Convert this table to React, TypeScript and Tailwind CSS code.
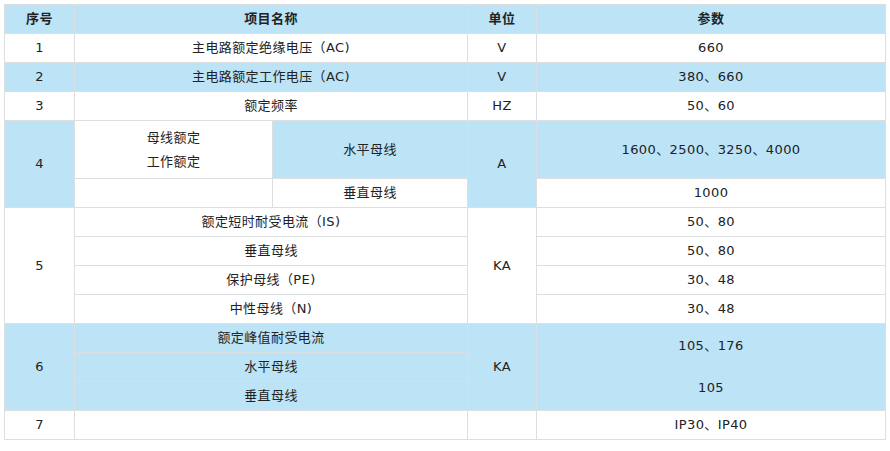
import React from "react";

const blue = "bg-[#bde3f7]";
const white = "bg-white";

type CellProps = {
	className?: string;
	children?: React.ReactNode;
};

function Cell({ className = "", children }: CellProps) {
	return (
		<div className={`flex items-center justify-center text-center ${className}`}>
			{children}
		</div>
	);
}

export default function App() {
	return (
		<div className="min-h-[451px] w-[890px] bg-white p-1 font-['DejaVu_Sans','Noto_Sans_CJK_SC',sans-serif] text-[13px] tracking-[0.4px] text-[#222]">
			<div className="grid w-[882px] grid-cols-[69px_197px_194px_68px_348px] grid-rows-[28px_28px_28px_28px_57px_28px_28px_28px_28px_28px_28px_28px_28px_28px] gap-px border border-[#dcdfe2] bg-[#dcdfe2]">
				{/* header */}
				<Cell className={`${blue} font-bold`}>序号</Cell>
				<Cell className={`${blue} col-span-2 font-bold`}>项目名称</Cell>
				<Cell className={`${blue} font-bold`}>单位</Cell>
				<Cell className={`${blue} font-bold`}>参数</Cell>

				{/* 1 */}
				<Cell className={white}>1</Cell>
				<Cell className={`${white} col-span-2`}>主电路额定绝缘电压（AC)</Cell>
				<Cell className={white}>V</Cell>
				<Cell className={white}>660</Cell>

				{/* 2 */}
				<Cell className={blue}>2</Cell>
				<Cell className={`${blue} col-span-2`}>主电路额定工作电压（AC)</Cell>
				<Cell className={blue}>V</Cell>
				<Cell className={blue}>380、660</Cell>

				{/* 3 */}
				<Cell className={white}>3</Cell>
				<Cell className={`${white} col-span-2`}>额定频率</Cell>
				<Cell className={white}>HZ</Cell>
				<Cell className={white}>50、60</Cell>

				{/* 4 */}
				<Cell className={`${blue} col-start-1 row-start-5 row-span-2`}>4</Cell>
				<Cell className={`${white} col-start-2 row-start-5 flex-col leading-[24px]`}>
					<span>母线额定</span>
					<span>工作额定</span>
				</Cell>
				<Cell className={`${blue} col-start-3 row-start-5`}>水平母线</Cell>
				<Cell className={`${blue} col-start-4 row-start-5 row-span-2`}>A</Cell>
				<Cell className={`${blue} col-start-5 row-start-5`}>1600、2500、3250、4000</Cell>
				<Cell className={`${white} col-start-2 row-start-6`} />
				<Cell className={`${white} col-start-3 row-start-6`}>垂直母线</Cell>
				<Cell className={`${white} col-start-5 row-start-6`}>1000</Cell>

				{/* 5 */}
				<Cell className={`${white} col-start-1 row-start-7 row-span-4`}>5</Cell>
				<Cell className={`${white} col-start-2 col-span-2 row-start-7`}>额定短时耐受电流（IS)</Cell>
				<Cell className={`${white} col-start-2 col-span-2 row-start-8`}>垂直母线</Cell>
				<Cell className={`${white} col-start-2 col-span-2 row-start-9`}>保护母线（PE)</Cell>
				<Cell className={`${white} col-start-2 col-span-2 row-start-10`}>中性母线（N)</Cell>
				<Cell className={`${white} col-start-4 row-start-7 row-span-4`}>KA</Cell>
				<Cell className={`${white} col-start-5 row-start-7`}>50、80</Cell>
				<Cell className={`${white} col-start-5 row-start-8`}>50、80</Cell>
				<Cell className={`${white} col-start-5 row-start-9`}>30、48</Cell>
				<Cell className={`${white} col-start-5 row-start-10`}>30、48</Cell>

				{/* 6 */}
				<Cell className={`${blue} col-start-1 row-start-11 row-span-3`}>6</Cell>
				<Cell className={`${blue} col-start-2 col-span-2 row-start-11`}>额定峰值耐受电流</Cell>
				<Cell className={`${blue} col-start-2 col-span-2 row-start-12`}>水平母线</Cell>
				<Cell className={`${blue} col-start-2 col-span-2 row-start-13`}>垂直母线</Cell>
				<Cell className={`${blue} col-start-4 row-start-11 row-span-3`}>KA</Cell>
				<div className={`${blue} col-start-5 row-start-11 row-span-3 flex flex-col pb-px`}>
					<div className="flex flex-1 items-center justify-center pt-px">105、176</div>
					<div className="flex flex-1 items-center justify-center">105</div>
				</div>

				{/* 7 */}
				<Cell className={`${white} col-start-1 row-start-14`}>7</Cell>
				<Cell className={`${white} col-start-2 col-span-2 row-start-14`} />
				<Cell className={`${white} col-start-4 row-start-14`} />
				<Cell className={`${white} col-start-5 row-start-14`}>IP30、IP40</Cell>
			</div>
		</div>
	);
}
